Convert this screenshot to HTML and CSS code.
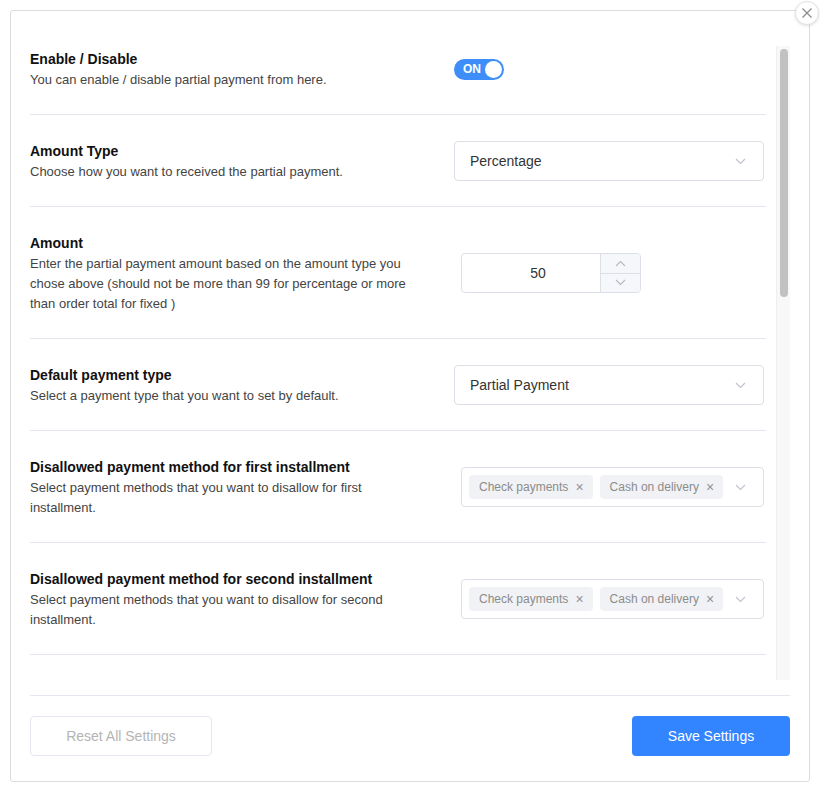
FILE: index.html
```html
<!DOCTYPE html>
<html>
<head>
<meta charset="utf-8">
<link rel="stylesheet" href="styles.css">
</head>
<body>
<div class="modal">
  <button class="close" aria-label="Close">
    <svg width="12" height="12" viewBox="0 0 12 12"><path d="M1.5 1.5 L10.5 10.5 M10.5 1.5 L1.5 10.5" stroke="#8c8c8c" stroke-width="1.3" fill="none"/></svg>
  </button>
  <div class="body">
    <div class="rows">
      <div class="row">
        <div class="text">
          <div class="title">Enable / Disable</div>
          <div class="desc">You can enable / disable partial payment from here.</div>
        </div>
        <div class="control">
          <div class="toggle"><span class="toggle-label">ON</span><span class="knob"></span></div>
        </div>
      </div>
      <div class="row">
        <div class="text">
          <div class="title">Amount Type</div>
          <div class="desc">Choose how you want to received the partial payment.</div>
        </div>
        <div class="control">
          <div class="select"><span>Percentage</span>
            <svg class="chev" width="11" height="7" viewBox="0 0 11 7"><polyline points="1,1 5.5,5.5 10,1" fill="none" stroke="#c0c4cc" stroke-width="1.2"/></svg>
          </div>
        </div>
      </div>
      <div class="row">
        <div class="text">
          <div class="title">Amount</div>
          <div class="desc">Enter the partial payment amount based on the amount type you chose above (should not be more than 99 for percentage or more than order total for fixed )</div>
        </div>
        <div class="control">
          <div class="number">
            <div class="num-value">50</div>
            <div class="stepper">
              <div class="step"><svg width="11" height="7" viewBox="0 0 11 7"><polyline points="1,6 5.5,1.5 10,6" fill="none" stroke="#b4b8bf" stroke-width="1.1"/></svg></div>
              <div class="step"><svg width="11" height="7" viewBox="0 0 11 7"><polyline points="1,1 5.5,5.5 10,1" fill="none" stroke="#b4b8bf" stroke-width="1.1"/></svg></div>
            </div>
          </div>
        </div>
      </div>
      <div class="row">
        <div class="text">
          <div class="title">Default payment type</div>
          <div class="desc">Select a payment type that you want to set by default.</div>
        </div>
        <div class="control">
          <div class="select"><span>Partial Payment</span>
            <svg class="chev" width="11" height="7" viewBox="0 0 11 7"><polyline points="1,1 5.5,5.5 10,1" fill="none" stroke="#c0c4cc" stroke-width="1.2"/></svg>
          </div>
        </div>
      </div>
      <div class="row">
        <div class="text">
          <div class="title">Disallowed payment method for first installment</div>
          <div class="desc">Select payment methods that you want to disallow for first installment.</div>
        </div>
        <div class="control">
          <div class="multi">
            <span class="tag">Check payments <span class="x">×</span></span>
            <span class="tag">Cash on delivery <span class="x">×</span></span>
            <svg class="chev" width="11" height="7" viewBox="0 0 11 7"><polyline points="1,1 5.5,5.5 10,1" fill="none" stroke="#c0c4cc" stroke-width="1.2"/></svg>
          </div>
        </div>
      </div>
      <div class="row">
        <div class="text">
          <div class="title">Disallowed payment method for second installment</div>
          <div class="desc">Select payment methods that you want to disallow for second installment.</div>
        </div>
        <div class="control">
          <div class="multi">
            <span class="tag">Check payments <span class="x">×</span></span>
            <span class="tag">Cash on delivery <span class="x">×</span></span>
            <svg class="chev" width="11" height="7" viewBox="0 0 11 7"><polyline points="1,1 5.5,5.5 10,1" fill="none" stroke="#c0c4cc" stroke-width="1.2"/></svg>
          </div>
        </div>
      </div>
      <div class="row">
        <div class="text">
          <div class="title">&nbsp;</div>
          <div class="desc">&nbsp;</div>
        </div>
      </div>
    </div>
    <div class="scrollbar"><div class="thumb"></div></div>
  </div>
  <div class="footer">
    <button class="btn reset">Reset All Settings</button>
    <button class="btn save">Save Settings</button>
  </div>
</div>
</body>
</html>
```

FILE: styles.css
```css
* { box-sizing: border-box; }
html, body { margin: 0; padding: 0; background: #fff; }
body {
  font-family: "Liberation Sans", Arial, Helvetica, sans-serif;
  color: #333;
}
.modal {
  position: relative;
  margin: 10px 0 0 10px;
  width: 800px;
  height: 772px;
  border: 1px solid #dcdcdc;
  border-radius: 3px;
  padding: 0 19px;
  display: flex;
  flex-direction: column;
}
.close {
  position: absolute;
  top: -10px;
  right: -10px;
  width: 24px;
  height: 24px;
  border-radius: 50%;
  background: #fff;
  border: 1px solid #e2e2e2;
  box-shadow: 0 1px 3px rgba(0,0,0,0.12);
  padding: 0;
  display: flex;
  align-items: center;
  justify-content: center;
}
.body {
  margin-top: 12px;
  height: 657px;
  display: flex;
  gap: 10px;
}
.rows {
  flex: 1;
  overflow: hidden;
}
.row {
  display: flex;
  align-items: center;
  padding: 25px 0 24px;
  border-bottom: 1px solid #e4e7ed;
}
.text { width: 400px; }
.title {
  font-size: 14px;
  font-weight: bold;
  line-height: 22px;
  color: #111;
}
.desc {
  font-size: 13px;
  line-height: 20px;
  color: #444;
}
.control {
  margin-left: auto;
  margin-right: 2px;
  width: 310px;
  display: flex;
}
.toggle {
  width: 50px;
  height: 21px;
  border-radius: 11px;
  background: #3d8ef8;
  display: flex;
  align-items: center;
  justify-content: space-between;
  padding: 0 2px 0 9px;
}
.toggle-label {
  color: #fff;
  font-size: 12px;
  font-weight: bold;
}
.knob {
  width: 17px;
  height: 17px;
  border-radius: 50%;
  background: #fff;
}
.select {
  width: 310px;
  height: 40px;
  border: 1px solid #dcdfe6;
  border-radius: 4px;
  display: flex;
  align-items: center;
  justify-content: space-between;
  padding: 0 17px 0 15px;
  font-size: 14px;
  color: #333;
}
.number {
  margin-left: 7px;
  width: 180px;
  height: 40px;
  border: 1px solid #dcdfe6;
  border-radius: 4px;
  display: flex;
  overflow: hidden;
}
.num-value {
  flex: 1;
  display: flex;
  align-items: center;
  justify-content: center;
  padding-left: 14px;
  font-size: 14px;
  color: #333;
}
.stepper {
  width: 40px;
  border-left: 1px solid #dcdfe6;
  background: #f5f7fa;
  display: flex;
  flex-direction: column;
}
.step {
  flex: 1;
  display: flex;
  align-items: center;
  justify-content: center;
}
.step + .step { border-top: 1px solid #dcdfe6; }
.multi {
  margin-left: 7px;
  width: 303px;
  height: 40px;
  border: 1px solid #dcdfe6;
  border-radius: 4px;
  display: flex;
  align-items: center;
  padding: 0 17px 0 7px;
  gap: 7px;
}
.multi .chev { margin-left: auto; }
.tag {
  height: 24px;
  border-radius: 4px;
  background: #f0f2f5;
  color: #8c8c8c;
  font-size: 12px;
  display: inline-flex;
  align-items: center;
  padding: 0 9px 0 10px;
  white-space: nowrap;
}
.tag .x {
  margin-left: 7px;
  font-size: 14px;
  color: #909399;
}
.scrollbar {
  width: 14px;
  margin-top: 23px;
  background: #f8f8f8;
  border-left: 1px solid #efefef;
  padding: 3px 2px 0 3px;
}
.thumb {
  height: 248px;
  border-radius: 4px;
  background: #c1c1c1;
}
.footer {
  margin-top: 15px;
  border-top: 1px solid #e4e7ed;
  padding: 20px 0 25px;
  display: flex;
  justify-content: space-between;
}
.btn {
  height: 40px;
  border-radius: 4px;
  font-family: "Liberation Sans", Arial, sans-serif;
  font-size: 14px;
}
.reset {
  width: 182px;
  background: #fff;
  border: 1px solid #e4e7ed;
  color: #b4b4b4;
}
.save {
  width: 158px;
  background: #3384ff;
  border: none;
  color: #fff;
}
```
